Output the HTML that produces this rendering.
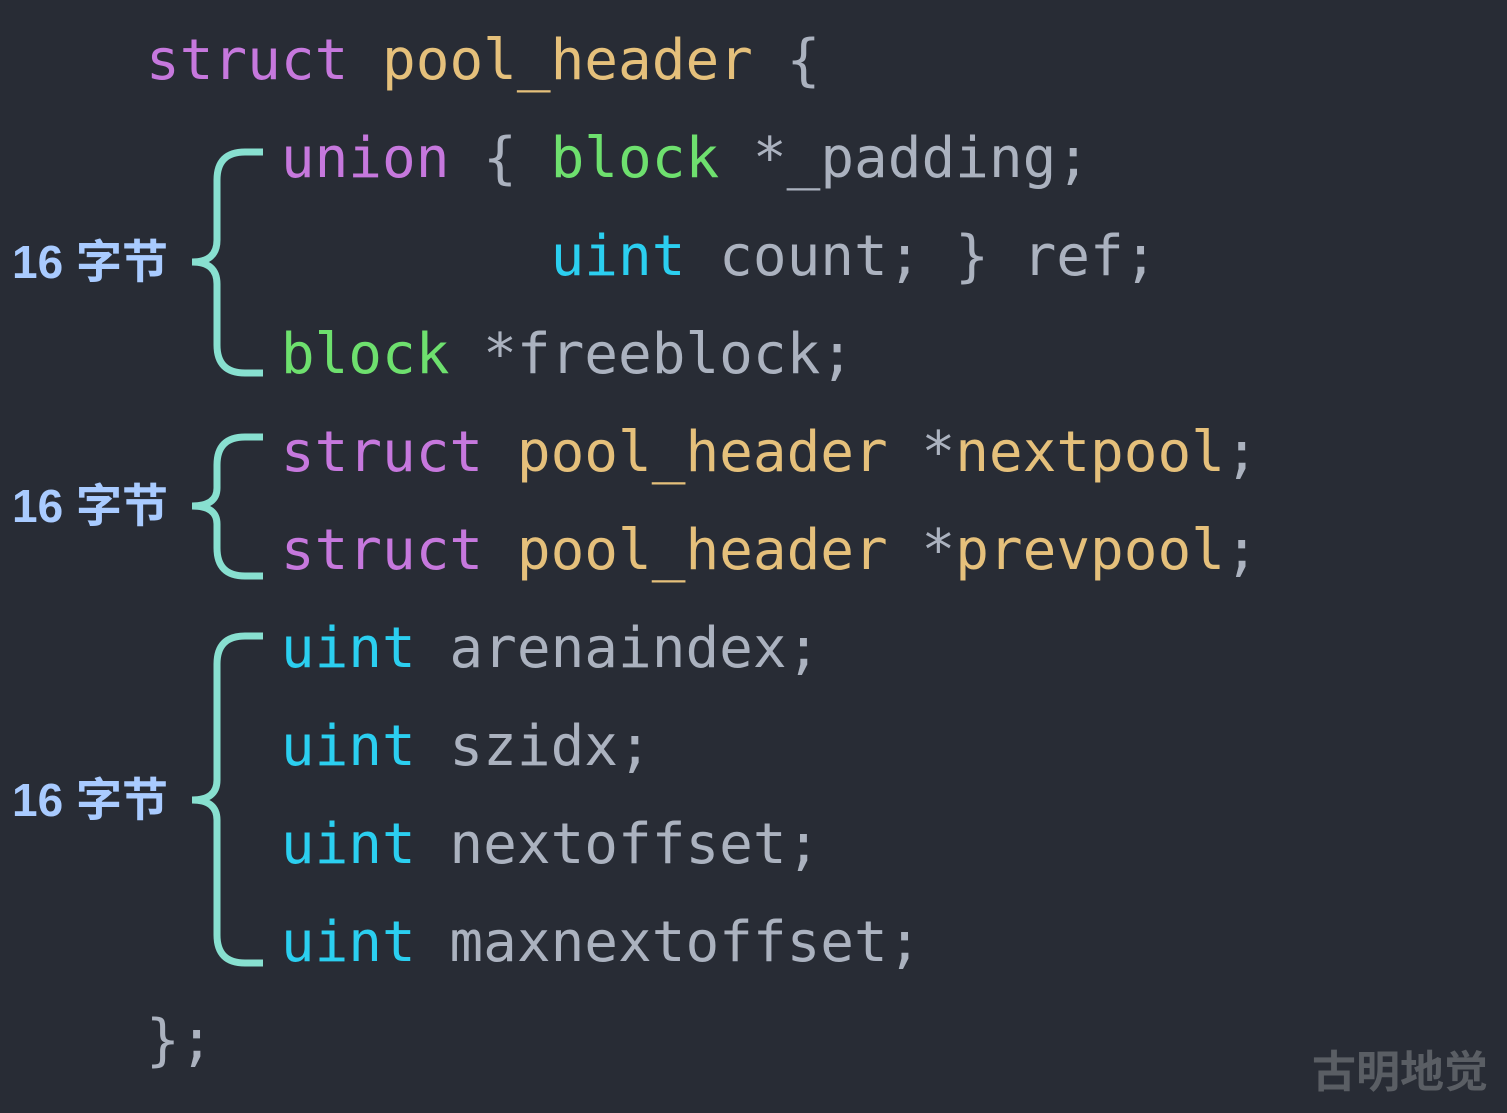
<!DOCTYPE html>
<html><head><meta charset="utf-8"><style>
body{margin:0;width:1507px;height:1113px;background:#282c35;overflow:hidden;position:relative}
pre{position:absolute;left:146px;top:12px;margin:0;font-family:"DejaVu Sans Mono","Liberation Mono",monospace;font-size:56px;line-height:98px;color:#abb2bf}
.k{color:#c678dd}.y{color:#e5c07b}.g{color:#6ee06e}.c{color:#2bcff0}
.l{position:absolute;left:12px;font-family:"Liberation Sans","Noto Sans CJK SC",sans-serif;font-weight:bold;font-size:46px;color:#a9cbff;line-height:50px}
.w{position:absolute;left:1312px;top:1040px;font-family:"Noto Sans CJK SC",sans-serif;font-weight:bold;font-size:44px;color:#5a5e64;line-height:56px}
</style></head><body>
<pre><span class="k">struct</span> <span class="y">pool_header</span> {
    <span class="k">union</span> { <span class="g">block</span> *_padding;
            <span class="c">uint</span> count; } ref;
    <span class="g">block</span> *freeblock;
    <span class="k">struct</span> <span class="y">pool_header</span> *<span class="y">nextpool</span>;
    <span class="k">struct</span> <span class="y">pool_header</span> *<span class="y">prevpool</span>;
    <span class="c">uint</span> arenaindex;
    <span class="c">uint</span> szidx;
    <span class="c">uint</span> nextoffset;
    <span class="c">uint</span> maxnextoffset;
};</pre>
<svg style="position:absolute;left:0;top:0" width="1507" height="1113" fill="none" stroke="#88e0d0" stroke-width="7">
<path d="M263 152 H245 Q217 152 217 180 V240 Q217 262 192 262 Q217 262 217 284 V345 Q217 373 245 373 H263"/>
<path d="M263 437 H245 Q217 437 217 465 V488 Q217 506 192 506 Q217 506 217 524 V548 Q217 576 245 576 H263"/>
<path d="M263 636 H245 Q217 636 217 664 V780 Q217 800 192 800 Q217 800 217 820 V935 Q217 963 245 963 H263"/>
</svg>
<div class="l" style="top:237px">16 字节</div>
<div class="l" style="top:481px">16 字节</div>
<div class="l" style="top:775px">16 字节</div>
<div class="w">古明地觉</div>
</body></html>
